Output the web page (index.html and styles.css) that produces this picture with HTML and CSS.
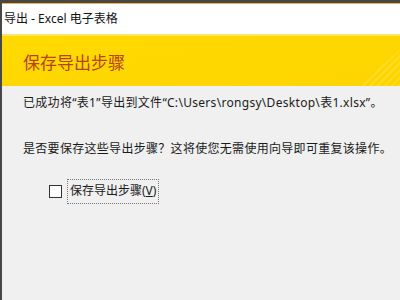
FILE: index.html
```html
<!DOCTYPE html>
<html lang="zh-CN">
<head>
  <meta charset="UTF-8" />
  <title>导出 - Excel 电子表格</title>
  <link rel="stylesheet" href="styles.css">
</head>
<body>
  <div class="window">
    <div class="titlebar">导出 - Excel 电子表格</div>

    <div class="banner">
      <h2>保存导出步骤</h2>
    </div>

    <div class="content">
      <p>已成功将“表1”导出到文件“C:\Users\rongsy\Desktop\表1.xlsx”。</p>
      <p class="question">是否要保存这些导出步骤？这将使您无需使用向导即可重复该操作。</p>

      <label class="check">
        <span class="box"></span>
        <span class="focus">保存导出步骤(<u>V</u>)</span>
      </label>
    </div>
  </div>
</body>
</html>
```

FILE: styles.css
```css
html, body {
  margin: 0;
  height: 100%;
}
body {
  font-family: "Noto Sans", "Noto Sans CJK SC", sans-serif;
  font-size: 12px;
  color: #1a1a1a;
  background: #f0f0f0;
}
.window {
  height: 100%;
  box-sizing: border-box;
  border-left: 2px solid #474747;
  border-top: 3px solid #474747;
  display: flex;
  flex-direction: column;
}
.titlebar {
  height: 31px;
  line-height: 29px;
  padding-left: 2px;
  background: #fff;
  border-top: 1px solid #f3b24a;
  box-sizing: border-box;
  font-size: 12px;
  color: #111;
}
.banner {
  position: relative;
  height: 52px;
  box-sizing: border-box;
  padding-left: 21px;
  display: flex;
  align-items: center;
  background: linear-gradient(170deg, #ffda00, #fdd400);
  border-top: 2px solid #fde56b;
  overflow: hidden;
}
.banner::after {
  content: "";
  position: absolute;
  right: 0;
  bottom: 0;
  width: 42px;
  height: 36px;
  background: repeating-linear-gradient(-45deg, rgba(255,255,255,0.14) 0 2px, transparent 2px 5px);
  clip-path: polygon(100% 0, 100% 100%, 0 100%);
}
h2 {
  margin: 0;
  font-size: 17px;
  font-weight: normal;
  color: #b8430a;
}
.content {
  padding: 9px 0 0 21px;
  letter-spacing: 0.3px;
}
p {
  margin: 0;
  line-height: 16px;
}
.question {
  margin-top: 30px;
}
.check {
  display: flex;
  align-items: center;
  margin: 22px 0 0 26px;
  letter-spacing: 0;
}
.box {
  width: 11px;
  height: 11px;
  border: 1px solid #333;
  background: #fff;
  margin-right: 5px;
}
.focus {
  border: 1px dotted #777;
  padding: 3px 2px 4px 2px;
  line-height: 16px;
}
```
